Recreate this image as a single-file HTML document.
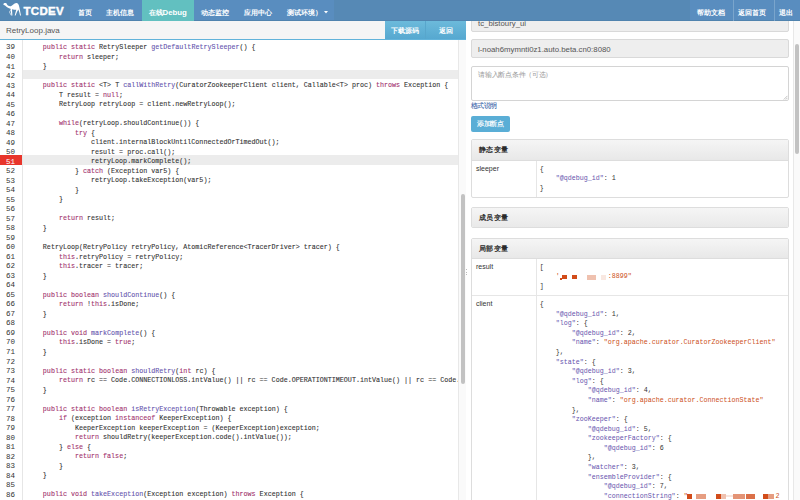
<!DOCTYPE html>
<html><head><meta charset="utf-8">
<style>
*{margin:0;padding:0;box-sizing:border-box}
html,body{width:800px;height:500px;overflow:hidden;background:#fff}
body{font-family:"Liberation Sans",sans-serif;position:relative;color:#333}
.abs{position:absolute}
#nav{position:absolute;left:0;top:0;width:800px;height:21px;background:#5689b5;z-index:10;color:#fff;font-size:7.5px}
#nav .it{position:absolute;top:0;height:21px;line-height:26.5px;font-size:7px;white-space:nowrap;font-weight:600}
#nav .act{background:#62c0c0}
#nav .sep{position:absolute;top:0;width:1px;height:21px;background:#7aa5cc}
#brand{position:absolute;left:23.5px;top:0;height:21px;line-height:23px;font-weight:bold;font-size:11.5px;letter-spacing:0.3px;-webkit-text-stroke:0.4px #fff}
#left{position:absolute;left:0;top:21px;width:466px;height:479px;overflow:hidden}
#hdr{position:absolute;left:0;top:0;width:466px;height:19px;background:#f5f5f5;border-bottom:1px solid #62b3da}
#hdr .t{position:absolute;left:6px;top:0;line-height:19.5px;font-size:8px;color:#555}
.btn{position:absolute;top:0;height:18px;line-height:20.5px;color:#fff;font-size:6.7px;font-weight:600;text-align:center;background:linear-gradient(#6cbadb,#56a8d0)}
#code{position:absolute;left:0;top:19px;width:466px;height:460px;font-family:"Liberation Mono",monospace;font-size:6.7px;-webkit-text-stroke:0.1px}
#gut{position:absolute;left:0;top:0;width:23px;height:460px;border-right:1px solid #e6e6e6;background:#fff}
.g,.l{height:9.53px;line-height:9.53px;white-space:pre;padding-top:2px}
.g{text-align:right;padding-right:7px;color:#333;width:22px;font-size:7.5px;padding-top:2.3px;-webkit-text-stroke:0}
.g.bp{background:#e8352b;color:#fff}
.l.hv,.l.bp{background:#ececec}
#lines{position:absolute;left:23px;top:1.2px;width:435px;height:460px;overflow:hidden}
#gl{position:absolute;left:0;top:1.2px;width:22px}
.l{padding-left:3.8px;color:#333}
i{font-style:normal}
.k{color:#a1316d}
.f{color:#6654ae}
#vtrack{position:absolute;left:458px;top:19px;width:8px;height:460px;background:#fafafa;border-left:1px solid #e8e8e8}
#vthumb{position:absolute;left:461px;top:172.5px;width:4px;height:190.5px;background:#c2c2c2;border-radius:2px}
#right{position:absolute;left:466px;top:0;width:334px;height:500px;overflow:hidden;background:#fff}
.inp{position:absolute;left:5px;width:318px;height:19px;background:#eee;border:1px solid #d9d9d9;border-radius:2px;font-size:7.8px;color:#555;padding-left:6px;line-height:19.4px;white-space:nowrap}
#ta{position:absolute;left:5px;top:65.6px;width:317.5px;height:35px;border:1px solid #d4d4d4;border-radius:2px;background:#fff;font-size:7px;letter-spacing:-0.3px;color:#999;padding:3.4px 6.4px}
#fmt{position:absolute;left:5px;top:100.8px;font-size:7px;letter-spacing:-0.6px;color:#3b66aa;line-height:9px;-webkit-text-stroke:0.1px #3b66aa}
#add{position:absolute;left:5px;top:116.4px;width:39px;height:15.6px;background:#5aaed6;border-radius:2px;color:#fff;font-size:7px;letter-spacing:-0.2px;font-weight:400;-webkit-text-stroke:0.15px #fff;line-height:15.6px;text-align:center}
.card{position:absolute;left:5px;width:318px;border:1px solid #ddd;border-radius:2px;background:#fff;overflow:hidden}
.ch{height:20.5px;line-height:20.5px;background:linear-gradient(#f5f5f5,#e8e8e8);border-bottom:1px solid #ddd;font-size:7px;letter-spacing:0.25px;font-weight:600;padding-left:7px;color:#2a2a2a}
.row{position:relative;border-bottom:1px solid #e6e6e6}
.row .k1{position:absolute;left:4px;top:4px;font-size:7px;color:#333}
.row .v{margin-left:64px;border-left:1px solid #e6e6e6;padding:3.8px 0 3.8px 2.8px;font-family:"Liberation Mono",monospace;font-size:6.667px;line-height:9.6px;white-space:pre;color:#333}
.jk{color:#6654ae}
.js{color:#cc4f20}
#rtrack{position:absolute;left:327px;top:21px;width:7px;height:479px;background:#fafafa;border-left:1px solid #e8e8e8}
#rthumb{position:absolute;left:329px;top:44px;width:4px;height:110px;background:#c2c2c2;border-radius:2px}
.rb{position:absolute;background:#d24c1a;z-index:5}
.dot{position:absolute;width:1px;height:1px;background:#bbb;z-index:5}
</style></head><body>
<div id="nav">
  <svg class="abs" style="left:0;top:0" width="24" height="20" viewBox="0 0 24 20">
    <path fill="#fff" d="M3.4 4.2C3.4 3.2 4.8 2.9 6 3.1C6.6 3.3 6.8 4 7.2 4.8C7.8 5.8 9 6.4 10.8 6.2C12.5 5.8 14 3.2 16.2 3C17.8 2.9 18.8 4.5 19.3 7C19.8 9 20.3 12 21 15.6L20 15.6C19.6 13 19 11 18.3 9.6C17.5 11 16.5 13 15.6 15.6L14.7 15.6C15.2 13.5 15.8 11.5 16.3 9.8C14.8 9.8 13.2 9.6 12 9.2L12.4 15.6L11.5 15.6C11.1 13.5 10.9 11.5 10.5 8.8C8.5 8.3 6.5 7 4.8 5.3C4 5.2 3.4 4.9 3.4 4.2Z"/><path d="M10.6 10.2L9.5 12L11.2 15.4" stroke="#fff" stroke-opacity=".65" stroke-width="1" fill="none"/>
  </svg>
  <div id="brand">TCDEV</div>
  <div class="abs" style="left:70px;top:0;width:264px;height:21px;background:#598dbf"></div>
  <div class="abs" style="left:690px;top:0;width:110px;height:21px;background:#598dbf"></div>
  <div class="abs" style="left:0;top:20px;width:800px;height:1px;background:#5083ae"></div>
  <div class="it" style="left:77.5px">首页</div>
  <div class="it" style="left:106px">主机信息</div>
  <div class="it act" style="left:142px;width:52px;padding-left:6.5px">在线<span style="font-size:7.8px">Debug</span></div>
  <div class="it" style="left:201px">动态监控</div>
  <div class="it" style="left:243.5px">应用中心</div>
  <div class="it" style="left:287px">测试环境）</div>
  <svg class="abs" style="left:323.5px;top:11px" width="4" height="3" viewBox="0 0 4 3"><path d="M0 0H4L2 2.5Z" fill="#fff"/></svg>
  <div class="it" style="left:696.5px">帮助文档</div>
  <div class="sep" style="left:733px"></div>
  <div class="it" style="left:737.5px">返回首页</div>
  <div class="sep" style="left:773.5px"></div>
  <div class="it" style="left:779px">退出</div>
</div>

<div id="left">
  <div id="hdr"><div class="t">RetryLoop.java</div>
    <div class="btn" style="left:385px;width:41px;border-right:1px solid #58a6cc">下载源码</div>
    <div class="btn" style="left:426px;width:40px">返回</div>
  </div>
  <div id="code">
    <div id="gut"></div>
    <div id="gl">
<div class="g">39</div>
<div class="g">40</div>
<div class="g">41</div>
<div class="g hv">42</div>
<div class="g">43</div>
<div class="g">44</div>
<div class="g">45</div>
<div class="g">46</div>
<div class="g">47</div>
<div class="g">48</div>
<div class="g">49</div>
<div class="g">50</div>
<div class="g bp">51</div>
<div class="g">52</div>
<div class="g">53</div>
<div class="g">54</div>
<div class="g">55</div>
<div class="g">56</div>
<div class="g">57</div>
<div class="g">58</div>
<div class="g">59</div>
<div class="g">60</div>
<div class="g">61</div>
<div class="g">62</div>
<div class="g">63</div>
<div class="g">64</div>
<div class="g">65</div>
<div class="g">66</div>
<div class="g">67</div>
<div class="g">68</div>
<div class="g">69</div>
<div class="g">70</div>
<div class="g">71</div>
<div class="g">72</div>
<div class="g">73</div>
<div class="g">74</div>
<div class="g">75</div>
<div class="g">76</div>
<div class="g">77</div>
<div class="g">78</div>
<div class="g">79</div>
<div class="g">80</div>
<div class="g">81</div>
<div class="g">82</div>
<div class="g">83</div>
<div class="g">84</div>
<div class="g">85</div>
<div class="g">86</div>
<div class="g">87</div>
    </div>
    <div id="lines">
<div class="l">    <i class="k">public</i> <i class="k">static</i> RetrySleeper <i class="f">getDefaultRetrySleeper</i>() {</div>
<div class="l">        <i class="k">return</i> sleeper;</div>
<div class="l">    }</div>
<div class="l hv">&#8203;</div>
<div class="l">    <i class="k">public</i> <i class="k">static</i> &lt;T&gt; T <i class="f">callWithRetry</i>(CuratorZookeeperClient client, Callable&lt;T&gt; proc) <i class="k">throws</i> Exception {</div>
<div class="l">        T result = <i class="k">null</i>;</div>
<div class="l">        RetryLoop retryLoop = client.newRetryLoop();</div>
<div class="l">&#8203;</div>
<div class="l">        <i class="k">while</i>(retryLoop.shouldContinue()) {</div>
<div class="l">            <i class="k">try</i> {</div>
<div class="l">                client.internalBlockUntilConnectedOrTimedOut();</div>
<div class="l">                result = proc.call();</div>
<div class="l bp">                retryLoop.markComplete();</div>
<div class="l">            } <i class="k">catch</i> (Exception var5) {</div>
<div class="l">                retryLoop.takeException(var5);</div>
<div class="l">            }</div>
<div class="l">        }</div>
<div class="l">&#8203;</div>
<div class="l">        <i class="k">return</i> result;</div>
<div class="l">    }</div>
<div class="l">&#8203;</div>
<div class="l">    RetryLoop(RetryPolicy retryPolicy, AtomicReference&lt;TracerDriver&gt; tracer) {</div>
<div class="l">        <i class="k">this</i>.retryPolicy = retryPolicy;</div>
<div class="l">        <i class="k">this</i>.tracer = tracer;</div>
<div class="l">    }</div>
<div class="l">&#8203;</div>
<div class="l">    <i class="k">public</i> <i class="k">boolean</i> <i class="f">shouldContinue</i>() {</div>
<div class="l">        <i class="k">return</i> !<i class="k">this</i>.isDone;</div>
<div class="l">    }</div>
<div class="l">&#8203;</div>
<div class="l">    <i class="k">public</i> <i class="k">void</i> <i class="f">markComplete</i>() {</div>
<div class="l">        <i class="k">this</i>.isDone = <i class="k">true</i>;</div>
<div class="l">    }</div>
<div class="l">&#8203;</div>
<div class="l">    <i class="k">public</i> <i class="k">static</i> <i class="k">boolean</i> <i class="f">shouldRetry</i>(<i class="k">int</i> rc) {</div>
<div class="l">        <i class="k">return</i> rc == Code.CONNECTIONLOSS.intValue() || rc == Code.OPERATIONTIMEOUT.intValue() || rc == Code.SESSIONMOVED.intValue() || rc == Code.SESSIONEXPIRED.intValue();</div>
<div class="l">    }</div>
<div class="l">&#8203;</div>
<div class="l">    <i class="k">public</i> <i class="k">static</i> <i class="k">boolean</i> <i class="f">isRetryException</i>(Throwable exception) {</div>
<div class="l">        <i class="k">if</i> (exception <i class="k">instanceof</i> KeeperException) {</div>
<div class="l">            KeeperException keeperException = (KeeperException)exception;</div>
<div class="l">            <i class="k">return</i> shouldRetry(keeperException.code().intValue());</div>
<div class="l">        } <i class="k">else</i> {</div>
<div class="l">            <i class="k">return</i> <i class="k">false</i>;</div>
<div class="l">        }</div>
<div class="l">    }</div>
<div class="l">&#8203;</div>
<div class="l">    <i class="k">public</i> <i class="k">void</i> <i class="f">takeException</i>(Exception exception) <i class="k">throws</i> Exception {</div>
<div class="l">        <i class="k">this</i>.sleeper.sleepFor(1L, TimeUnit.SECONDS);</div>
    </div>
  </div>
  <div id="vtrack"></div>
  <div id="vthumb"></div>
</div>

<div id="right">
  <div class="inp" style="top:13px">tc_bistoury_ui</div>
  <div class="inp" style="top:39.4px">l-noah6mymnti0z1.auto.beta.cn0:8080</div>
  <div id="ta">请输入断点条件（可选）<svg style="position:absolute;right:0;bottom:0" width="5" height="5" viewBox="0 0 5 5"><path d="M4.5 0.8L0.8 4.5M4.5 2.8L2.8 4.5" stroke="#999" stroke-width="0.6"/></svg></div>
  <div id="fmt">格式说明</div>
  <div id="add">添加断点</div>
  <div class="card" style="top:139.4px;height:58.2px">
    <div class="ch">静态变量</div>
    <div class="row" style="border-bottom:0"><div class="k1">sleeper</div><div class="v">{
    <span class="jk">"@qdebug_id"</span>: 1
}</div></div>
  </div>
  <div class="card" style="top:207.4px;height:21px">
    <div class="ch" style="border-bottom:0">成员变量</div>
  </div>
  <div class="card" style="top:238px;height:300px">
    <div class="ch" style="height:19.8px;line-height:19.8px">局部变量</div>
    <div class="row"><div class="k1">result</div><div class="v">[
    <span class="js">'            :8899"</span>
]</div></div>
    <div class="row"><div class="k1">client</div><div class="v">{
    <span class="jk">"@qdebug_id"</span>: 1,
    <span class="jk">"log"</span>: {
        <span class="jk">"@qdebug_id"</span>: 2,
        <span class="jk">"name"</span>: <span class="js">"org.apache.curator.CuratorZookeeperClient"</span>
    },
    <span class="jk">"state"</span>: {
        <span class="jk">"@qdebug_id"</span>: 3,
        <span class="jk">"log"</span>: {
            <span class="jk">"@qdebug_id"</span>: 4,
            <span class="jk">"name"</span>: <span class="js">"org.apache.curator.ConnectionState"</span>
        },
        <span class="jk">"zooKeeper"</span>: {
            <span class="jk">"@qdebug_id"</span>: 5,
            <span class="jk">"zookeeperFactory"</span>: {
                <span class="jk">"@qdebug_id"</span>: 6
            },
            <span class="jk">"watcher"</span>: 3,
            <span class="jk">"ensembleProvider"</span>: {
                <span class="jk">"@qdebug_id"</span>: 7,
                <span class="jk">"connectionString"</span>: <span class="js">"                      2</span>
            }
        }
    }
}</div></div>
  </div>
  <div id="rtrack"></div>
  <div id="rthumb"></div>
</div>

<div id="redact">
  <div class="rb" style="left:560px;top:278px;width:2px;height:1.5px"></div>
  <div class="rb" style="left:562.4px;top:275px;width:5px;height:4.3px"></div>
  <div class="rb" style="left:572px;top:275px;width:5px;height:4.3px"></div>
  <div class="rb" style="left:586.6px;top:275px;width:9.4px;height:4.5px;opacity:.35"></div>
  <div class="rb" style="left:600.6px;top:275px;width:5px;height:4.5px;opacity:.13"></div>
  <div class="rb" style="left:687px;top:494px;width:4.7px;height:4.5px"></div>
  <div class="rb" style="left:696px;top:494px;width:10px;height:4.5px;opacity:.55"></div>
  <div class="rb" style="left:715.5px;top:494px;width:5px;height:4.5px"></div>
  <div class="rb" style="left:720.5px;top:494px;width:5px;height:4.5px;opacity:.35"></div>
  <div class="rb" style="left:725.5px;top:495px;width:7.5px;height:2px;opacity:.15"></div>
  <div class="rb" style="left:733px;top:494px;width:11.5px;height:4.5px;opacity:.6"></div>
  <div class="rb" style="left:746px;top:494px;width:9px;height:4.5px;opacity:.8"></div>
  <div class="rb" style="left:763px;top:494px;width:5px;height:4.5px"></div>
  <div class="rb" style="left:768px;top:494px;width:5.5px;height:4.5px;opacity:.55"></div>
</div>
<div class="dot" style="left:466px;top:269px"></div>
<div class="dot" style="left:466px;top:271.6px"></div>
<div class="dot" style="left:466px;top:274.2px"></div>
</body></html>
